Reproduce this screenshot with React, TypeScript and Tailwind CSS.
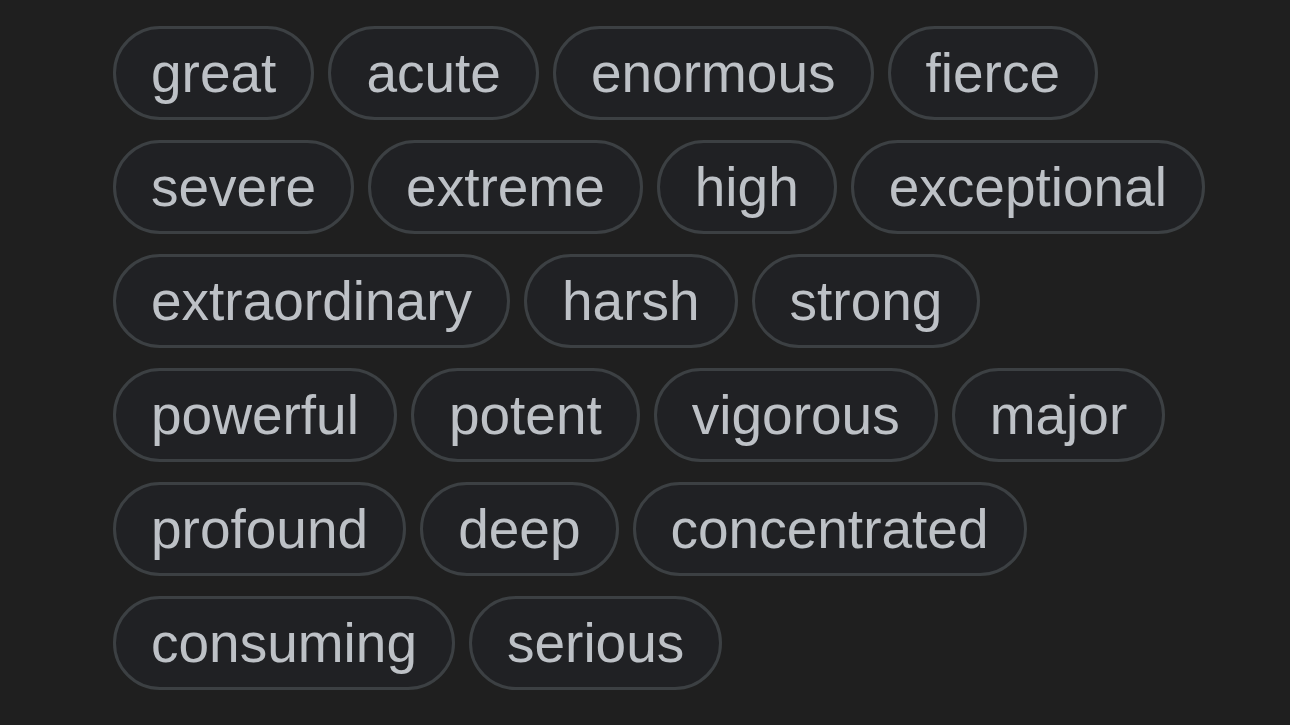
const words = [
  "great",
  "acute",
  "enormous",
  "fierce",
  "severe",
  "extreme",
  "high",
  "exceptional",
  "extraordinary",
  "harsh",
  "strong",
  "powerful",
  "potent",
  "vigorous",
  "major",
  "profound",
  "deep",
  "concentrated",
  "consuming",
  "serious",
];

export default function App() {
  return (
    <div
      className="h-[725px] w-[1290px] overflow-hidden bg-[#1f1f1f] pl-[113px] pt-[26px]"
      style={{ fontFamily: '"Liberation Sans", Arial, sans-serif' }}
    >
      <div className="flex w-[1130px] flex-wrap gap-x-[14px] gap-y-[20px]">
        {words.map((w) => (
          <span
            key={w}
            className="flex h-[94px] items-center rounded-full border-[3px] border-[#3c4043] bg-[#202124] px-[35px] text-[55px] leading-none text-[#bdc1c6]"
          >
            {w}
          </span>
        ))}
      </div>
    </div>
  );
}
